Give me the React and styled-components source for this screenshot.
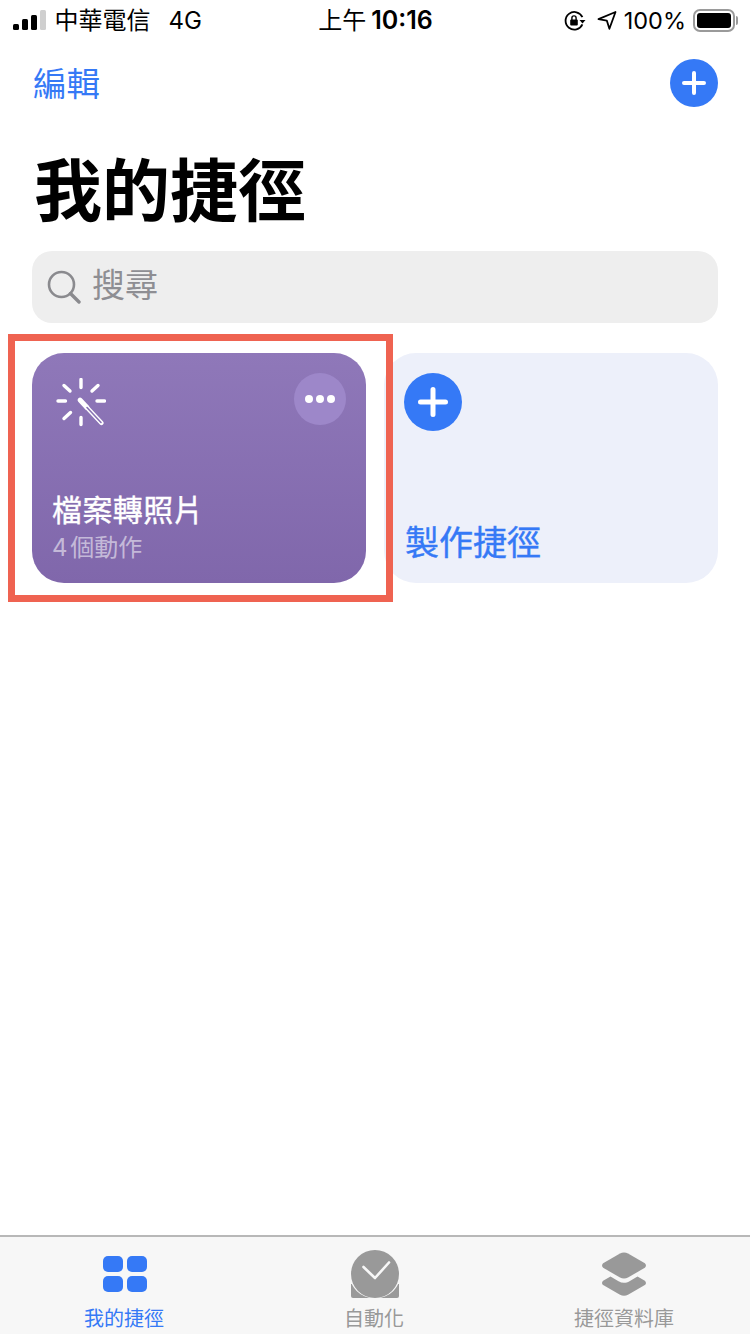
import React from 'react';
import styled, { createGlobalStyle } from 'styled-components';

const CJK = `Inter, "Liberation Sans", "Noto Sans CJK TC", sans-serif`;
const BLUE = '#3579f6';

const GlobalStyle = createGlobalStyle`
  html, body {
    margin: 0;
    padding: 0;
    background: #fff;
  }
  body {
    font-family: ${CJK};
    overflow: hidden;
  }
  * {
    box-sizing: border-box;
  }
`;

const Page = styled.div`
  width: 750px;
  height: 1334px;
  display: flex;
  flex-direction: column;
  background: #fff;
`;

// Status bar
const StatusBar = styled.div`
  height: 40px;
  flex: none;
  display: grid;
  grid-template-columns: 1fr auto 1fr;
  align-items: center;
  padding: 0 12px 0 13px;
  color: #000;
  font-size: 24px;
  line-height: 40px;
`;

const StatusLeft = styled.div`
  display: flex;
  align-items: center;
`;

const Signal = styled.div`
  display: flex;
  align-items: flex-end;
  gap: 3.5px;
  height: 20px;
  margin: 0 9px 1px 0;
`;

const SignalBar = styled.span`
  width: 5.5px;
  height: ${p => p.$h}px;
  border-radius: 1.5px;
  background: ${p => (p.$off ? '#cfcfcf' : '#000')};
`;

const Carrier = styled.span`
  width: 114px;
  font-size: 24px;
`;

const Clock = styled.span`
  font-size: 24px;
  font-weight: 400;
`;

const ClockDigits = styled.span`
  margin-left: 5px;
  font-weight: 600;
  font-size: 25px;
`;

const StatusRight = styled.div`
  display: flex;
  align-items: center;
  justify-content: flex-end;
  padding-right: 3px;
`;

const StatusIcon = styled.span`
  display: flex;
  margin-right: ${p => p.$gap}px;
`;

const Percent = styled.span`
  margin: 0 7px 0 7px;
  font-size: 23.5px;
`;

const Battery = styled.div`
  position: relative;
  width: 42px;
  height: 23px;
  padding: 2px;
  border: 2px solid #9a9a9a;
  border-radius: 7px;

  &::before {
    content: '';
    display: block;
    height: 100%;
    border-radius: 3px;
    background: #000;
  }
  &::after {
    content: '';
    position: absolute;
    right: -5px;
    top: 5px;
    width: 2px;
    height: 9px;
    border-radius: 0 2px 2px 0;
    background: #9a9a9a;
  }
`;

// Navigation
const NavBar = styled.div`
  height: 86px;
  flex: none;
  display: flex;
  justify-content: space-between;
  align-items: flex-start;
  padding: 19px 32px 0 33px;
`;

const EditLink = styled.span`
  color: ${BLUE};
  font-size: 33.5px;
  line-height: 50px;
`;

const PlusCircle = styled.div`
  width: ${p => p.$size}px;
  height: ${p => p.$size}px;
  border-radius: 50%;
  background: ${BLUE};
  display: flex;
  align-items: center;
  justify-content: center;
`;

const Title = styled.h1`
  margin: 0;
  padding: 5px 0 0 34px;
  height: 125px;
  font-size: 68px;
  line-height: 120px;
  font-weight: 700;
  color: #000;
  flex: none;
`;

const SearchBar = styled.div`
  height: 72px;
  flex: none;
  margin: 0 32px;
  padding-left: 15px;
  display: flex;
  align-items: center;
  gap: 11px;
  background: #eeeeee;
  border-radius: 20px;
  color: #8e8e93;
  font-size: 33px;
`;

const SearchText = styled.span`
  line-height: 40px;
  margin-top: -4px;
`;

const Grid = styled.div`
  position: relative;
  margin: 30px 32px 0;
  display: grid;
  grid-template-columns: 334px 334px;
  gap: 18px;
  flex: none;
`;

const Card = styled.div`
  height: 230px;
  border-radius: 32px;
  position: relative;
  display: flex;
  flex-direction: column;
`;

const ShortcutCard = styled(Card)`
  background: linear-gradient(180deg, #8f78b9, #8067ab);
  padding: 25px 20px 0 20px;
  color: #fff;
`;

const CardTop = styled.div`
  display: flex;
  justify-content: space-between;
  align-items: flex-start;
`;

const WandBox = styled.div`
  margin: 0 0 0 4px;
  height: 50px;
`;

const MoreButton = styled.div`
  width: 52px;
  height: 52px;
  margin-top: -5px;
  border-radius: 50%;
  background: #9d87c9;
  display: flex;
  align-items: center;
  justify-content: center;
  gap: 3px;
`;

const Dot = styled.span`
  width: 8px;
  height: 8px;
  border-radius: 50%;
  background: #fff;
`;

const CardName = styled.div`
  margin-top: 62px;
  font-size: 30px;
  line-height: 40px;
  letter-spacing: 0.4px;
  font-weight: 400;
  -webkit-text-stroke: 0.4px #fff;
`;

const CardMeta = styled.div`
  font-size: 24px;
  line-height: 36px;
  word-spacing: -4px;
  color: rgba(255, 255, 255, 0.55);
`;

const CreateCard = styled(Card)`
  background: #edf0fa;
  padding: 20px 0 0 20px;
`;

const CreateLabel = styled.div`
  margin-top: auto;
  padding: 0 0 19px 1px;
  color: ${BLUE};
  font-size: 34px;
  line-height: 42px;
  font-weight: 400;
  -webkit-text-stroke: 0.4px ${BLUE};
`;

const Highlight = styled.div`
  position: absolute;
  left: -24px;
  top: -19px;
  width: 385px;
  height: 268px;
  border: 7px solid #ef6351;
  pointer-events: none;
`;

const Spacer = styled.div`
  flex: 1;
`;

// Tab bar
const TabBar = styled.div`
  height: 99px;
  flex: none;
  display: grid;
  grid-template-columns: repeat(3, 1fr);
  background: #f7f7f7;
  border-top: 2px solid #b8b8b8;
`;

const Tab = styled.div`
  display: flex;
  flex-direction: column;
  align-items: center;
  color: ${p => (p.$active ? BLUE : '#999999')};
`;

const TabIcon = styled.div`
  height: 58px;
  display: flex;
  align-items: flex-start;
  padding-top: ${p => p.$top}px;
  margin-right: ${p => p.$shift || 0}px;
`;

const TabLabel = styled.span`
  font-size: 20px;
  line-height: 30px;
  margin: 9px 2px 0 0;
  white-space: nowrap;
`;

const PlusIcon = ({ size }) => (
  <svg width={size} height={size} viewBox="0 0 24 24" fill="none">
    <path d="M12 2v20M2 12h20" stroke="#fff" strokeWidth="4" strokeLinecap="round" />
  </svg>
);

const RotationLock = () => (
  <svg width="22" height="20" viewBox="0 0 22 20" fill="none">
    <path d="M18.400 13.400A8.800 8.800 0 1 1 18.400 6.200" stroke="#000" strokeWidth="1.8" />
    <path d="M15.500 9h6l-3 3.600z" fill="#000" />
    <rect x="6.200" y="8.400" width="7.600" height="6" rx="1" fill="#000" />
    <path d="M7.900 9V7a2.100 2.100 0 0 1 4.200 0V9" stroke="#000" strokeWidth="1.400" />
  </svg>
);

const LocationArrow = () => (
  <svg width="20" height="19" viewBox="0 0 20 19" fill="none">
    <path d="M1.500 8.200 18.500 1 12.400 17.800 9.800 9.600z" stroke="#000" strokeWidth="1.800" strokeLinejoin="round" />
  </svg>
);

const SearchIcon = () => (
  <svg width="34" height="34" viewBox="0 0 34 34" fill="none">
    <circle cx="14.500" cy="14.500" r="12.500" stroke="#8a8a8e" strokeWidth="2.600" />
    <path d="M23.500 23.500 32 32" stroke="#8a8a8e" strokeWidth="3.400" strokeLinecap="round" />
  </svg>
);

const WandIcon = () => (
  <svg width="50" height="50" viewBox="0 0 50 50" fill="none" stroke="#fff" strokeLinecap="round">
    <g strokeWidth="3.400">
      <path d="M25 1.500v8M25 39.500v7M2 23h7.500M41 23h7.500" />
      <path d="M8 7.500l6 5.500M42 7.500l-6 5.500M8 40.500l6.500-6" />
    </g>
    <path d="M24 22 31 29.500" strokeWidth="4.800" />
    <path d="M30 28.500 45.500 45" strokeWidth="4.400" />
    <path d="M31 29.500 45 44.500" strokeWidth="1.600" stroke="#8872b4" />
  </svg>
);

const GridIcon = () => (
  <svg width="44" height="36" viewBox="0 0 44 36" fill={BLUE}>
    <rect x="0" y="0" width="20" height="16" rx="5" />
    <rect x="24" y="0" width="20" height="16" rx="5" />
    <rect x="0" y="20" width="20" height="16" rx="5" />
    <rect x="24" y="20" width="20" height="16" rx="5" />
  </svg>
);

const AutomationIcon = () => (
  <svg width="48" height="48" viewBox="0 0 48 48" fill="none">
    <path d="M0 34h48v12a2 2 0 0 1-2 2H2a2 2 0 0 1-2-2z" fill="#999" />
    <circle cx="24" cy="22.500" r="26" fill="#f7f7f7" />
    <circle cx="24" cy="24" r="24" fill="#999" />
    <path d="M12.500 17 24 28 38 12.500" stroke="#f7f7f7" strokeWidth="2.600" strokeLinecap="round" strokeLinejoin="round" />
  </svg>
);

const LayersIcon = () => (
  <svg width="46" height="44" viewBox="0 0 46 44" fill="#999">
    <path d="M19 1.600c2.500-1.400 5.500-1.400 8 0l16 9.200c2.600 1.500 2.600 4 0 5.500l-16 9.100c-2.500 1.400-5.500 1.400-8 0L3 16.300c-2.600-1.500-2.600-4 0-5.500z" />
    <path d="M9.500 24.500 17.500 29.200c3.500 2 7.500 2 11 0l8-4.700 6.500 3.700c2.600 1.500 2.600 3.900 0 5.400l-16 9.200c-2.500 1.400-5.500 1.400-8 0L3 33.600c-2.600-1.500-2.600-3.900 0-5.400z" />
  </svg>
);

export default function App() {
  const bars = [6, 11, 15, 20];

  return (
    <Page>
      <GlobalStyle />
      <StatusBar>
        <StatusLeft>
          <Signal>
            {bars.map((h, i) => (
              <SignalBar key={i} $h={h} $off={i === 3} />
            ))}
          </Signal>
          <Carrier>中華電信</Carrier>
          <span>4G</span>
        </StatusLeft>
        <Clock>
          上午<ClockDigits>10:16</ClockDigits>
        </Clock>
        <StatusRight>
          <StatusIcon $gap={11}>
            <RotationLock />
          </StatusIcon>
          <StatusIcon $gap={0}>
            <LocationArrow />
          </StatusIcon>
          <Percent>100%</Percent>
          <Battery />
        </StatusRight>
      </StatusBar>

      <NavBar>
        <EditLink>編輯</EditLink>
        <PlusCircle $size={48}>
          <PlusIcon size={24} />
        </PlusCircle>
      </NavBar>

      <Title>我的捷徑</Title>

      <SearchBar>
        <SearchIcon />
        <SearchText>搜尋</SearchText>
      </SearchBar>

      <Grid>
        <ShortcutCard>
          <CardTop>
            <WandBox>
              <WandIcon />
            </WandBox>
            <MoreButton>
              <Dot />
              <Dot />
              <Dot />
            </MoreButton>
          </CardTop>
          <CardName>檔案轉照片</CardName>
          <CardMeta>4 個動作</CardMeta>
        </ShortcutCard>
        <CreateCard>
          <PlusCircle $size={58}>
            <PlusIcon size={30} />
          </PlusCircle>
          <CreateLabel>製作捷徑</CreateLabel>
        </CreateCard>
        <Highlight />
      </Grid>

      <Spacer />

      <TabBar>
        <Tab $active>
          <TabIcon $top={19}>
            <GridIcon />
          </TabIcon>
          <TabLabel>我的捷徑</TabLabel>
        </Tab>
        <Tab>
          <TabIcon $top={13}>
            <AutomationIcon />
          </TabIcon>
          <TabLabel>自動化</TabLabel>
        </Tab>
        <Tab>
          <TabIcon $top={15} $shift={2}>
            <LayersIcon />
          </TabIcon>
          <TabLabel>捷徑資料庫</TabLabel>
        </Tab>
      </TabBar>
    </Page>
  );
}
